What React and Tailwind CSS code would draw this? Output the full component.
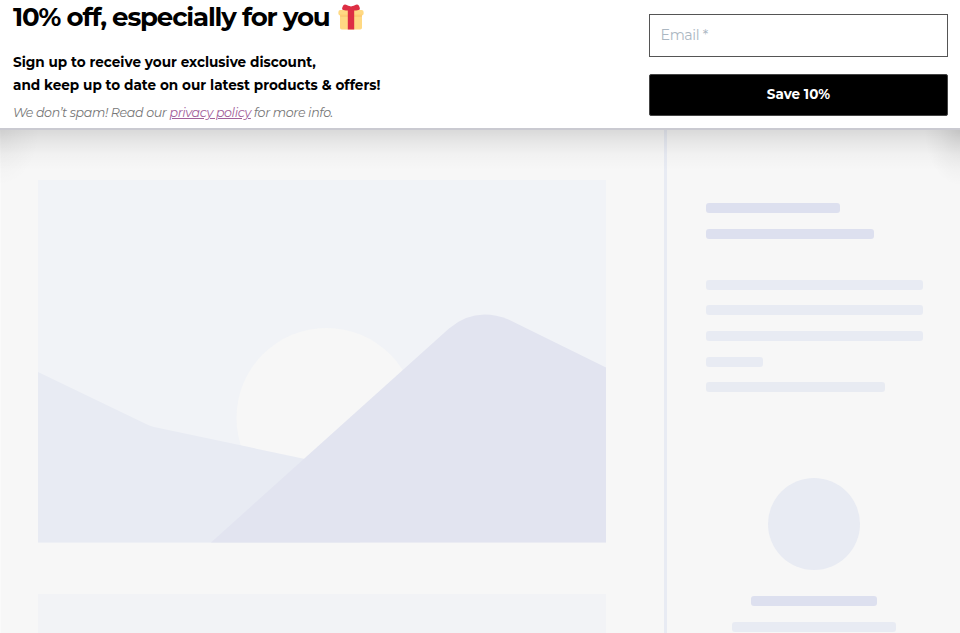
import React from "react";

function Gift() {
  return (
    <svg viewBox="0 0 26 27" className="h-[27px] w-[26px] shrink-0">
      <rect x="2" y="9" width="22" height="16.5" rx="1.8" fill="#FFD983" />
      <rect x="2.2" y="10.8" width="21.6" height="2" fill="#F9C976" />
      <rect x="0.4" y="6" width="25.2" height="5.6" rx="2" fill="#FFD983" />
      <rect x="2" y="10.6" width="22" height="1.4" fill="#FFCC73" />
      <path d="M9.800 5.200h6.400v20.300h-6.400z" fill="#DD2E44" />
      <path d="M13 6.3C10 6.6 6.300 6.700 4.600 5.800C3.500 5.200 4.500 2.500 5.400 1.300C6.400 .2 8 .6 9.200 1.300C10.700 2.100 12.200 2.400 13 2.400C13.800 2.400 15.300 2.100 16.800 1.300C18 .6 19.600 .2 20.600 1.300C21.500 2.500 22.500 5.200 21.400 5.800C19.700 6.700 16 6.600 13 6.300Z" fill="#DD2E44" />
    </svg>
  );
}

function Banner() {
  return (
    <header className="flex h-[130px] justify-between border-b-2 border-[#cacad1] bg-white">
      <div className="pl-[13px]">
        <h1 className="flex h-[34px] items-center text-[26px] font-bold leading-[34px]">
          <span className="w-[324.5px] whitespace-nowrap tracking-[-1.13px]">10% off, especially for you</span>
          <Gift />
        </h1>
        <p className="mt-[17px] whitespace-nowrap text-[13.6px] font-bold leading-[23px]">
          <span className="block">Sign up to receive your exclusive discount,</span>
          <span className="block">and keep up to date on our latest products &amp; offers!</span>
        </p>
        <p className="mt-[6px] whitespace-nowrap text-[12.6px] font-normal italic leading-[20px] tracking-[-0.35px] text-[#777]">
          We don’t spam! Read our <a className="text-[#a2609a] underline">privacy policy</a> for more info.
        </p>
      </div>
      <form className="mr-3 mt-[14px] flex w-[299px] flex-col gap-[17px]">
        <input
          type="text"
          placeholder="Email *"
          className="h-[42.5px] w-full border border-[#555] px-[10.5px] pb-px text-[14.2px] font-normal tracking-[-0.35px] placeholder:text-[#abb7c2]"
        />
        <button type="button" className="h-[42.5px] w-full rounded-[2px] border border-[#444] bg-black pb-[2px] text-[13.5px] font-bold text-white">
          Save 10%
        </button>
      </form>
    </header>
  );
}

function Landscape() {
  return (
    <svg viewBox="38 180 568 362.500" className="block h-[362.5px] w-[568px]">
      <path d="M38 180h568v362.500H38z" fill="#f1f3f7" />
      <circle cx="326.500" cy="418" r="90" fill="#f7f7f7" />
      <path d="M38 372L146 424Q150 426 154 427L305 459L360 542.500H38Z" fill="#e8ebf3" />
      <path d="M211 542.500L449 328.500Q475 306 508.500 319.500L606 367.500V542.500Z" fill="#e2e4f0" />
    </svg>
  );
}

export default function App() {
  return (
    <div className="flex h-[633px] w-[960px] flex-col overflow-hidden bg-[#f7f7f7] font-['Montserrat','Inter',sans-serif] text-black">
      <Banner />
      <main className="relative flex h-[503px]">
        <section className="w-[664.4px] shrink-0 border-l border-[#fafafa] pl-[37px] pt-[50px]">
          <Landscape />
          <div className="mt-[51.500px] h-[50px] w-[568px] bg-[#f2f3f6]" />
        </section>
        <aside className="h-full flex-1 border-l-[3px] border-[#e8ebf3] pl-[38.2px] pt-[73px]">
          <div className="flex flex-col gap-[15.6px]">
            <div className="h-[10px] w-[134.500px] rounded-[3px] bg-[#dde0ef]" />
            <div className="h-[10px] w-[168.500px] rounded-[3px] bg-[#dde0ef]" />
          </div>
          <div className="mt-[41.2px] flex flex-col gap-[15.6px]">
            <div className="h-[10px] w-[217.500px] rounded-[3px] bg-[#e8ebf3]" />
            <div className="h-[10px] w-[217.500px] rounded-[3px] bg-[#e8ebf3]" />
            <div className="h-[10px] w-[217px] rounded-[3px] bg-[#e8ebf3]" />
            <div className="h-[10px] w-[57.500px] rounded-[3px] bg-[#e8ebf3]" />
            <div className="h-[10px] w-[179.500px] rounded-[3px] bg-[#e8ebf2]" />
          </div>
          <div className="mt-[85.5px] flex w-[217px] flex-col items-center">
            <div className="size-[92.5px] shrink-0 rounded-full bg-[#e8ebf3]" />
            <div className="mt-[26px] h-[10px] w-[126px] rounded-[3px] bg-[#dde0ef]" />
            <div className="mt-[15.6px] h-[10px] w-[164px] rounded-[3px] bg-[#e8ebf3]" />
          </div>
        </aside>
        <div className="pointer-events-none absolute inset-x-0 top-0 h-10 bg-[linear-gradient(to_bottom,rgba(0,0,0,0.12),rgba(0,0,0,0.075)_25%,rgba(0,0,0,0.025)_60%,transparent)]" />
        <div className="pointer-events-none absolute left-0 top-0 h-14 w-10 bg-[radial-gradient(ellipse_at_top_left,rgba(0,0,0,0.05),rgba(0,0,0,0.02)_40%,transparent_70%)]" />
        <div className="pointer-events-none absolute right-0 top-0 h-14 w-9 bg-[radial-gradient(ellipse_at_top_right,rgba(0,0,0,0.1),rgba(0,0,0,0.035)_40%,transparent_70%)]" />
      </main>
    </div>
  );
}
